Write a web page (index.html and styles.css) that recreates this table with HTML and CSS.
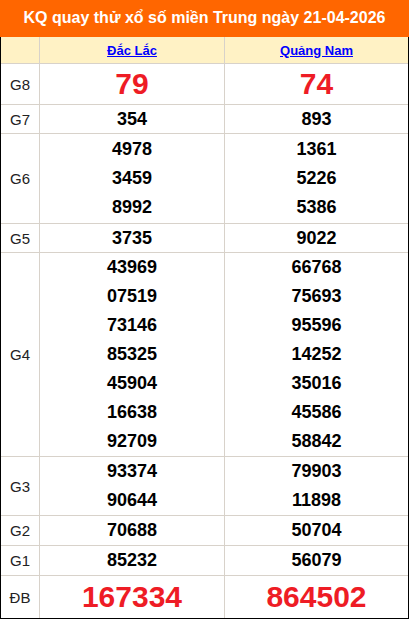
FILE: index.html
```html
<!DOCTYPE html>
<html lang="vi">
<head>
<meta charset="utf-8">
<title>KQ quay thử xổ số miền Trung</title>
<link rel="stylesheet" href="styles.css">
</head>
<body>
<div class="board">
  <div class="title">KQ quay thử xổ số miền Trung ngày 21-04-2026</div>
  <div class="frame">
    <table class="results">
      <colgroup><col class="c-lbl"><col class="c-a"><col class="c-b"></colgroup>
      <tr class="head">
        <th></th>
        <th><a href="#">Đắc Lắc</a></th>
        <th><a href="#">Quảng Nam</a></th>
      </tr>
      <tr class="g8">
        <td class="lbl">G8</td>
        <td class="big">79</td>
        <td class="big">74</td>
      </tr>
      <tr class="g7">
        <td class="lbl">G7</td>
        <td class="num"><div>354</div></td>
        <td class="num"><div>893</div></td>
      </tr>
      <tr class="g6">
        <td class="lbl">G6</td>
        <td class="num"><div>4978</div><div>3459</div><div>8992</div></td>
        <td class="num"><div>1361</div><div>5226</div><div>5386</div></td>
      </tr>
      <tr class="g5">
        <td class="lbl">G5</td>
        <td class="num"><div>3735</div></td>
        <td class="num"><div>9022</div></td>
      </tr>
      <tr>
        <td class="lbl">G4</td>
        <td class="num"><div>43969</div><div>07519</div><div>73146</div><div>85325</div><div>45904</div><div>16638</div><div>92709</div></td>
        <td class="num"><div>66768</div><div>75693</div><div>95596</div><div>14252</div><div>35016</div><div>45586</div><div>58842</div></td>
      </tr>
      <tr>
        <td class="lbl">G3</td>
        <td class="num"><div>93374</div><div>90644</div></td>
        <td class="num"><div>79903</div><div>11898</div></td>
      </tr>
      <tr>
        <td class="lbl">G2</td>
        <td class="num"><div>70688</div></td>
        <td class="num"><div>50704</div></td>
      </tr>
      <tr>
        <td class="lbl">G1</td>
        <td class="num"><div>85232</div></td>
        <td class="num"><div>56079</div></td>
      </tr>
      <tr class="db">
        <td class="lbl">ĐB</td>
        <td class="big">167334</td>
        <td class="big">864502</td>
      </tr>
    </table>
  </div>
</div>
</body>
</html>
```

FILE: styles.css
```css
* { box-sizing: border-box; }
html, body { margin: 0; padding: 0; background: #fff; }
body { font-family: "Liberation Sans", Arial, sans-serif; color: #000; }

.board { width: 409px; }

.title {
  height: 37px;
  background: #ff6600;
  color: #fff;
  font-weight: bold;
  font-size: 16px;
  line-height: 36px;
  text-align: center;
}

.frame {
  border-left: 1px solid #000;
  border-right: 1px solid #000;
  border-bottom: 1px solid #000;
}

.results {
  width: 407px;
  border-collapse: separate;
  border-spacing: 0;
  table-layout: fixed;
}
.c-lbl { width: 39px; }
.c-a { width: 185px; }
.c-b { width: 183px; }

.results th, .results td {
  padding: 0;
  border-right: 1px solid #d8d2ca;
  border-bottom: 1px solid #d8d2ca;
  text-align: center;
  vertical-align: middle;
}
.results tr > :last-child { border-right: none; }
.results tr:last-child > * { border-bottom: none; }

.head th {
  background: #fff2c5;
  height: 27px;
  font-size: 13px;
  font-weight: bold;
}
.head a { color: #0000ff; text-decoration: underline; }

.lbl {
  font-size: 15px;
  color: #222;
}

.num {
  font-size: 18px;
  font-weight: bold;
}
.num div { line-height: 29px; }
.g7 .num div, .g5 .num div { line-height: 28px; }
.g6 .num { padding: 1px 0; }

.big {
  color: #ee1c25;
  font-weight: bold;
  font-size: 30px;
}
.g8 .big { height: 41px; }
.db .big { height: 42px; }
```
